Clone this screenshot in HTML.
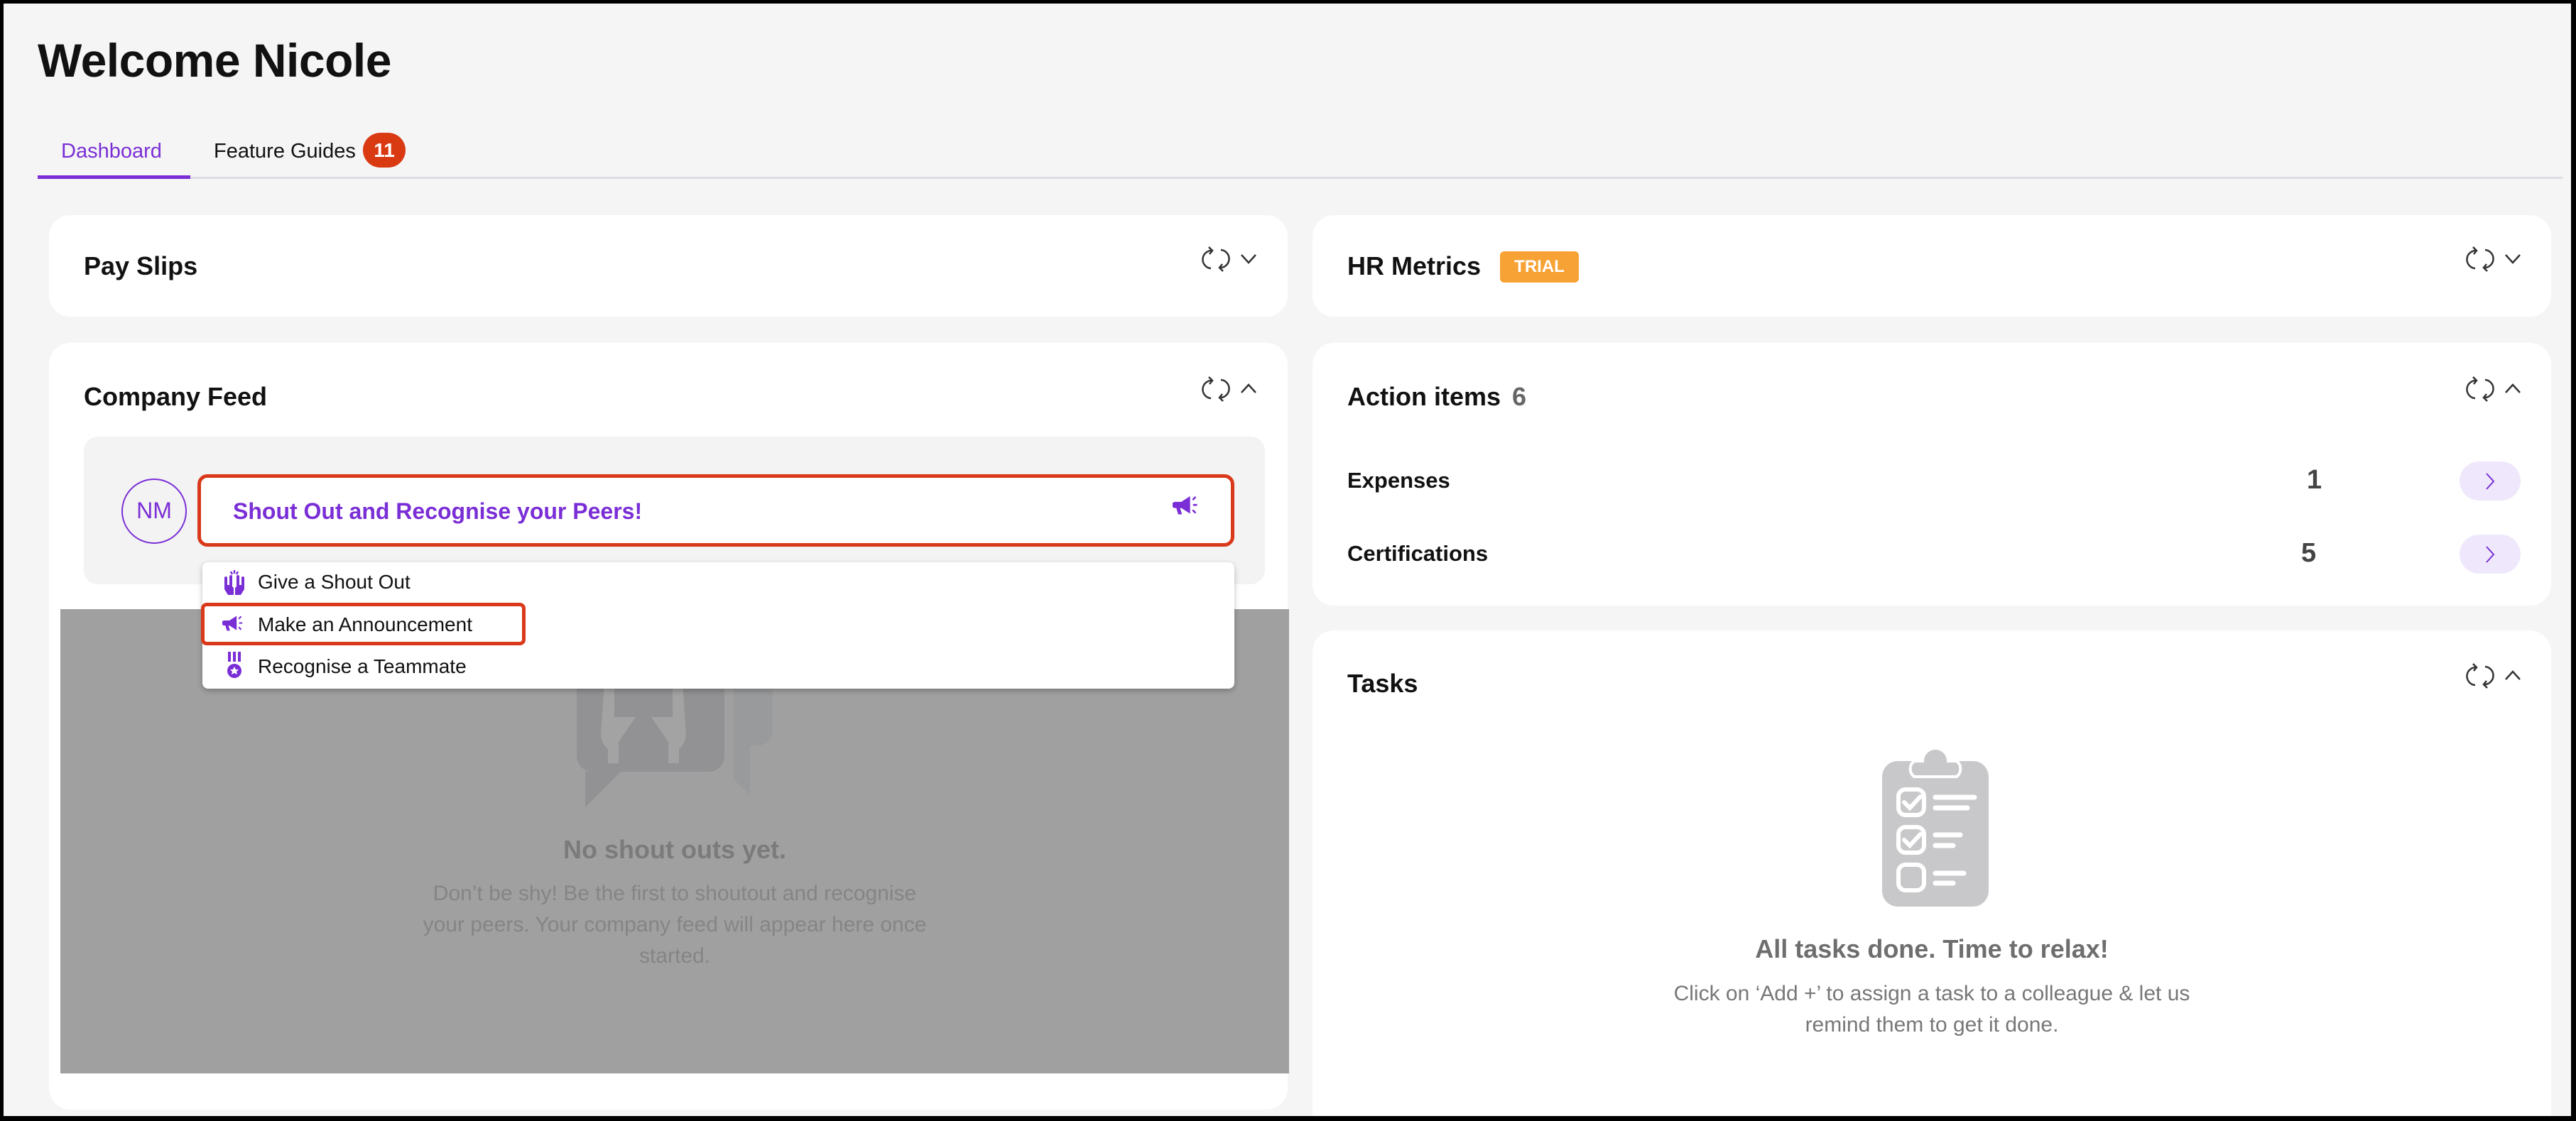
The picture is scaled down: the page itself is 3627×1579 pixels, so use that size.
<!DOCTYPE html>
<html><head><meta charset="utf-8"><style>
*{margin:0;padding:0;box-sizing:border-box}
html,body{width:3627px;height:1579px;overflow:hidden}
body{background:#000;font-family:"Liberation Sans",sans-serif;color:#111;position:relative}
.pg{position:absolute;left:5px;top:5px;width:3615px;height:1567px;background:#f5f5f5;overflow:hidden}
.a{position:absolute}
.card{position:absolute;background:#fff;border-radius:30px}
.h{position:absolute;font-weight:bold;font-size:36px;line-height:44px;color:#111}
.ic{position:absolute;width:80px;height:40px}
.t{white-space:nowrap}
</style></head><body>
<div class="pg">
<div class="a t" style="left:48px;top:40px;font-size:66px;font-weight:bold;line-height:80px;letter-spacing:-0.5px">Welcome Nicole</div>
<div class="a t" style="left:81px;top:190px;font-size:29px;color:#7a2ed6;line-height:36px">Dashboard</div>
<div class="a t" style="left:296px;top:190px;font-size:29px;color:#111;line-height:36px">Feature Guides</div>
<div class="a" style="left:506px;top:182px;width:60px;height:49px;border-radius:25px;background:#d93a12;color:#fff;font-weight:bold;font-size:28px;line-height:49px;text-align:center">11</div>
<div class="a" style="left:263px;top:244px;width:3340px;height:3px;background:#dcdce2"></div>
<div class="a" style="left:48px;top:242px;width:215px;height:5px;background:#7a2ed6"></div>

<div class="card" style="left:64px;top:298px;width:1744px;height:143px">
<div class="h t" style="left:49px;top:50px">Pay Slips</div>
</div>
<div class="card" style="left:64px;top:478px;width:1744px;height:1080px">
<div class="h t" style="left:49px;top:54px">Company Feed</div>
<div class="a" style="left:49px;top:132px;width:1663px;height:208px;background:#f3f3f3;border-radius:20px"></div>
<div class="a" style="left:102px;top:191px;width:92px;height:92px;border:2.5px solid #7a2ed6;border-radius:50%;color:#7a2ed6;font-size:32px;line-height:87px;text-align:center">NM</div>
<div class="a" style="left:209px;top:185px;width:1460px;height:102px;border:5px solid #d9391a;border-radius:14px;background:#fff">
<div class="a t" style="left:45px;top:27px;font-size:32px;font-weight:bold;color:#7a2ed6;line-height:40px">Shout Out and Recognise your Peers!</div>
<svg class="a" style="left:1368px;top:22px" width="44" height="36" viewBox="0 0 50 40"><path d="M4 13h10l14-9v28l-14-9h-2l3 10h-6l-3-10H4a4 4 0 0 1 0-10z" fill="#7a2ed6"/><path d="M33 9l3-3M34 18h4M33 27l3 3" stroke="#7a2ed6" stroke-width="3" stroke-linecap="round"/></svg>
</div>
<div class="a" style="left:16px;top:375px;width:1730px;height:654px;background:#a0a0a0">
<svg class="a" style="left:711px;top:42px" width="300" height="240" viewBox="0 0 300 240"><path d="M237 0h55v130a20 20 0 0 1-20 20h-12v70l-23-22z" fill="#999a9c"/><path d="M16 0h208v165a22 22 0 0 1-22 22H78l-50 50V187H38a22 22 0 0 1-22-22z" fill="#929294"/><g fill="#a3a3a3"><path d="M55 60a8 8 0 0 1 14 0v50h30l-24 35v30H60v-20a30 30 0 0 1-10-20z"/><path d="M165 60a8 8 0 0 0-14 0v50h-30l24 35v30h15v-20a30 30 0 0 0 10-20z"/></g></svg>
<div class="a t" style="left:0;width:1730px;top:317px;text-align:center;font-size:36px;font-weight:bold;color:#7b7b7b;line-height:44px">No shout outs yet.</div>
<div class="a" style="left:495px;width:740px;top:379px;text-align:center;font-size:30px;color:#858585;line-height:44px">Don’t be shy! Be the first to shoutout and recognise your peers. Your company feed will appear here once started.</div>
</div>
<div class="a" style="left:216px;top:309px;width:1453px;height:178px;background:#fff;border-radius:8px;box-shadow:0 3px 8px rgba(0,0,0,.25)">
<svg class="a" style="left:28px;top:10px" width="34" height="36" viewBox="0 0 34 36"><g fill="#7a2ed6"><path d="M3 12a2 2 0 0 1 4 0v10h3V10a2 2 0 0 1 4 0v14l2 2v10H8l-5-8z"/><path d="M31 12a2 2 0 0 0-4 0v10h-3V10a2 2 0 0 0-4 0v14l-2 2v10h8l5-8z"/></g><path d="M17 1v5M12 3l2 4M22 3l-2 4" stroke="#7a2ed6" stroke-width="2.5"/></svg>
<div class="a t" style="left:78px;top:10px;font-size:28px;line-height:36px">Give a Shout Out</div>
<div class="a t" style="left:78px;top:70px;font-size:28px;line-height:36px">Make an Announcement</div>
<svg class="a" style="left:28px;top:72px" width="36" height="30" viewBox="0 0 50 40"><path d="M4 13h10l14-9v28l-14-9h-2l3 10h-6l-3-10H4a4 4 0 0 1 0-10z" fill="#7a2ed6"/><path d="M33 9l3-3M34 18h4M33 27l3 3" stroke="#7a2ed6" stroke-width="3" stroke-linecap="round"/></svg>
<svg class="a" style="left:30px;top:126px" width="30" height="40" viewBox="0 0 30 40"><rect x="6" y="0" width="4" height="14" fill="#7a2ed6"/><rect x="13" y="0" width="4" height="14" fill="#7a2ed6"/><rect x="20" y="0" width="4" height="14" fill="#7a2ed6"/><circle cx="15" cy="27" r="10" fill="#7a2ed6"/><path d="M15 21l2 4h4l-3 3 1 4-4-2-4 2 1-4-3-3h4z" fill="#fff"/></svg>
<div class="a t" style="left:78px;top:129px;font-size:28px;line-height:36px">Recognise a Teammate</div>
</div>
<div class="a" style="left:214px;top:366px;width:457px;height:60px;border:5px solid #d9391a;border-radius:8px"></div>
</div>

<div class="card" style="left:1843px;top:298px;width:1744px;height:143px">
<div class="h t" style="left:49px;top:50px">HR Metrics</div>
<div class="a" style="left:264px;top:51px;width:111px;height:44px;background:#f7a235;border-radius:6px;color:#fff;font-weight:bold;font-size:24px;line-height:44px;text-align:center">TRIAL</div>
</div>
<div class="card" style="left:1843px;top:478px;width:1744px;height:370px">
<div class="h t" style="left:49px;top:54px">Action items <span style="color:#666;margin-left:6px">6</span></div>
<div class="a t" style="left:49px;top:174px;font-size:31px;font-weight:bold;line-height:40px">Expenses</div>
<div class="a t" style="left:1400px;top:170px;font-size:38px;font-weight:bold;color:#444;line-height:46px">1</div>
<div class="a" style="left:1615px;top:167px;width:86px;height:55px;border-radius:28px;background:#efe8fc"></div>
<svg class="a" style="left:1650px;top:181px" width="16" height="28" viewBox="0 0 16 28"><path d="M3 3l10 11-10 11" fill="none" stroke="#7a2ed6" stroke-width="2"/></svg>
<div class="a t" style="left:49px;top:277px;font-size:31px;font-weight:bold;line-height:40px">Certifications</div>
<div class="a t" style="left:1392px;top:273px;font-size:38px;font-weight:bold;color:#444;line-height:46px">5</div>
<div class="a" style="left:1615px;top:270px;width:86px;height:55px;border-radius:28px;background:#efe8fc"></div>
<svg class="a" style="left:1650px;top:284px" width="16" height="28" viewBox="0 0 16 28"><path d="M3 3l10 11-10 11" fill="none" stroke="#7a2ed6" stroke-width="2"/></svg>
</div>
<div class="card" style="left:1843px;top:883px;width:1744px;height:760px">
<div class="h t" style="left:49px;top:53px">Tasks</div>
<svg class="a" style="left:797px;top:164px" width="160" height="225" viewBox="0 0 160 225"><rect x="5" y="20" width="150" height="205" rx="22" fill="#c8c8ca"/><path d="M62 20a18 18 0 0 1 36 0h12a14 14 0 0 1 0 22H50a14 14 0 0 1 0-22z" fill="#c8c8ca" stroke="#fff" stroke-width="4"/><g fill="none" stroke="#fff" stroke-width="6" stroke-linecap="round"><rect x="28" y="60" width="36" height="36" rx="10"/><rect x="28" y="113" width="36" height="36" rx="10"/><rect x="28" y="166" width="36" height="36" rx="10"/><path d="M36 78l8 8 15-16M36 131l8 8 15-16"/><path d="M80 71h55M80 86h45M80 124h35M80 139h25M80 178h40M80 192h25" stroke-width="7"/></g></svg>
<div class="a t" style="left:0;width:1744px;top:427px;text-align:center;font-size:36px;font-weight:bold;color:#6e6e6e;line-height:44px">All tasks done. Time to relax!</div>
<div class="a" style="left:482px;width:780px;top:490px;text-align:center;font-size:30px;color:#777;line-height:44px">Click on ‘Add +’ to assign a task to a colleague &amp; let us remind them to get it done.</div>
</div>

<svg class="ic" style="left:1685px;top:340px" viewBox="0 0 80 40"><g fill="none" stroke="#333" stroke-width="2.5"><path d="M17 8a12 12 0 0 0-2 25M27 32a12 12 0 0 0 2-25"/><path d="M12 3l5 5-4 5M32 37l-5-5 4-5"/></g><path d="M58 14l10 11 10-11" fill="none" stroke="#333" stroke-width="2.5"/></svg>
<svg class="ic" style="left:1685px;top:523px" viewBox="0 0 80 40"><g fill="none" stroke="#333" stroke-width="2.5"><path d="M17 8a12 12 0 0 0-2 25M27 32a12 12 0 0 0 2-25"/><path d="M12 3l5 5-4 5M32 37l-5-5 4-5"/></g><path d="M58 25l10-11 10 11" fill="none" stroke="#333" stroke-width="2.5"/></svg>
<svg class="ic" style="left:3465px;top:340px" viewBox="0 0 80 40"><g fill="none" stroke="#333" stroke-width="2.5"><path d="M17 8a12 12 0 0 0-2 25M27 32a12 12 0 0 0 2-25"/><path d="M12 3l5 5-4 5M32 37l-5-5 4-5"/></g><path d="M58 14l10 11 10-11" fill="none" stroke="#333" stroke-width="2.5"/></svg>
<svg class="ic" style="left:3465px;top:523px" viewBox="0 0 80 40"><g fill="none" stroke="#333" stroke-width="2.5"><path d="M17 8a12 12 0 0 0-2 25M27 32a12 12 0 0 0 2-25"/><path d="M12 3l5 5-4 5M32 37l-5-5 4-5"/></g><path d="M58 25l10-11 10 11" fill="none" stroke="#333" stroke-width="2.5"/></svg>
<svg class="ic" style="left:3465px;top:927px" viewBox="0 0 80 40"><g fill="none" stroke="#333" stroke-width="2.5"><path d="M17 8a12 12 0 0 0-2 25M27 32a12 12 0 0 0 2-25"/><path d="M12 3l5 5-4 5M32 37l-5-5 4-5"/></g><path d="M58 25l10-11 10 11" fill="none" stroke="#333" stroke-width="2.5"/></svg>
</div>
</body></html>
